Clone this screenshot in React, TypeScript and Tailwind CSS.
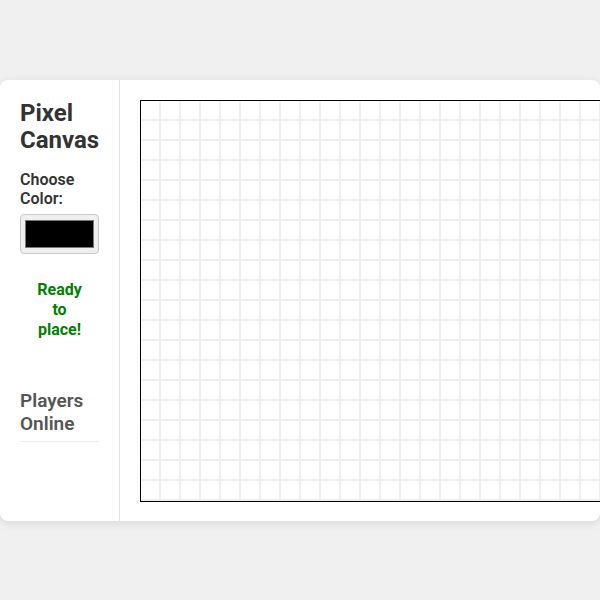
const COLS = 40
const ROWS = 20

const App = () => {
  const cells = Array.from({ length: COLS * ROWS })

  return (
    <div className="min-h-screen bg-[#f0f0f0] flex items-center justify-center font-['Roboto',sans-serif]">
      <div className="w-full h-[441px] bg-white rounded-lg shadow-[0_2px_10px_rgba(0,0,0,0.1)] flex overflow-hidden">
        <aside className="w-[120px] shrink-0 border-r border-[#e5e5e5] p-5 flex flex-col">
          <h2 className="text-[24px] leading-[27px] font-bold text-[#333]">Pixel Canvas</h2>
          <label className="mt-4 text-[16px] leading-[19px] font-semibold text-[#333]">Choose Color:</label>
          <input
            type="color"
            defaultValue="#000000"
            className="mt-1.5 w-full h-10 rounded bg-[#efefef] border border-[#c8c8c8] px-0.5 py-px"
          />
          <p className="mt-4 p-2.5 text-center text-[16px] leading-[20px] font-bold text-[#008000]">
            Ready to place!
          </p>
          <div className="mt-[39px] pb-1.5 border-b border-[#eee]">
            <h3 className="text-[19px] leading-[23px] font-semibold text-[#555]">Players Online</h3>
          </div>
        </aside>
        <main className="flex-1 min-w-0 p-5">
          <div
            className="border border-black grid w-max"
            style={{ gridTemplateColumns: `repeat(${COLS}, 20px)` }}
          >
            {cells.map((_, i) => (
              <div key={i} className="w-5 h-5 border-r-2 border-b-2 border-[#efefef]" />
            ))}
          </div>
        </main>
      </div>
    </div>
  )
}

export default App
